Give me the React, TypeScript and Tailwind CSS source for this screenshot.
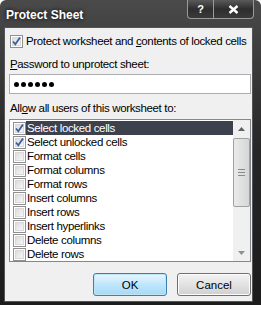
import React from 'react'

const items = [
  { label: 'Select locked cells', checked: true, selected: true },
  { label: 'Select unlocked cells', checked: true },
  { label: 'Format cells' },
  { label: 'Format columns' },
  { label: 'Format rows' },
  { label: 'Insert columns' },
  { label: 'Insert rows' },
  { label: 'Insert hyperlinks' },
  { label: 'Delete columns' },
  { label: 'Delete rows' },
]

const CheckBox = ({ checked }: { checked?: boolean }) => (
  <div className="relative h-[13px] w-[13px] shrink-0 border border-[#8f8f8f] bg-white">
    <div className="absolute inset-[1px] border border-[#d8d8d8] bg-gradient-to-br from-[#dcdcdc] to-[#f6f6f6]" />
    {checked && (
      <svg className="absolute left-[0px] top-[0px]" width="11" height="11" viewBox="0 0 11 11">
        <path d="M2 5.5 L4.3 8.3 L9 1.5" fill="none" stroke="#3c5fa0" strokeWidth="1.8" />
      </svg>
    )}
  </div>
)

const App = () => {
  return (
    <div className="h-[313px] w-[261px] bg-white font-['Liberation_Sans',Arial,sans-serif] text-[11.5px] leading-[14px] tracking-[-0.35px] text-black">
      {/* window frame */}
      <div className="flex h-[305px] w-[261px] flex-col rounded-t-[6px] bg-gradient-to-b from-[#4a4a4a] via-[#262626] to-[#1c1c1c] pb-[3px] pl-[4px] pr-[8px]">
        {/* title bar */}
        <div className="flex h-[27px] shrink-0 items-start">
          <div className="pl-[2px] pt-[8px] text-[12px] font-bold tracking-normal text-white [text-shadow:0_0_4px_#000]">
            Protect Sheet
          </div>
          <div className="ml-auto mr-[-1px] flex h-[19px] overflow-hidden rounded-b-[4px] border border-t-0 border-[#9a9a9a] bg-gradient-to-b from-[#5a5a5a] via-[#2e2e2e] to-[#3a3a3a]">
            <div className="flex w-[26px] items-center justify-center border-r border-[#9a9a9a] text-[11px] font-bold text-white">
              ?
            </div>
            <div className="flex w-[39px] items-center justify-center">
              <svg width="11" height="9" viewBox="0 0 11 9">
                <path d="M1.5 1 L9.5 8 M9.5 1 L1.5 8" stroke="#fff" strokeWidth="2.4" />
              </svg>
            </div>
          </div>
        </div>

        {/* client area */}
        <div className="flex flex-1 flex-col border border-[#555] bg-[#f0f0f0] pl-[4px] pr-[1px]">
          <div className="mt-[6px] flex items-center gap-[3px] pl-[1px]">
            <CheckBox checked />
            <span>
              Protect worksheet and <u>c</u>ontents of locked cells
            </span>
          </div>

          <div className="mt-[9px] pl-[1px]">
            <u>P</u>assword to unprotect sheet:
          </div>
          <div className="mt-[3px] flex h-[20px] items-center gap-[2px] border border-[#abadb3] bg-white pl-[4px]">
            {[0, 1, 2, 3, 4, 5].map(i => (
              <div key={i} className="h-[5px] w-[5px] rounded-full bg-black" />
            ))}
          </div>

          <div className="mt-[7px] pl-[1px]">
            All<u>o</u>w all users of this worksheet to:
          </div>

          {/* list box */}
          <div className="mt-[4px] flex h-[143px] border border-[#828790] bg-white">
            <div className="flex flex-1 flex-col pl-[3px] pt-[1px]">
              {items.map(item => (
                <div key={item.label} className="flex h-[14px] items-center">
                  <CheckBox checked={item.checked} />
                  <span
                    className={
                      item.selected
                        ? 'flex h-[14px] flex-1 items-center bg-[#3d414e] pl-[1px] text-white'
                        : 'pl-[1px]'
                    }
                  >
                    {item.label}
                  </span>
                </div>
              ))}
            </div>
            {/* scrollbar */}
            <div className="flex w-[17px] flex-col bg-[#f0f0f0]">
              <div className="flex h-[17px] items-center justify-center">
                <svg width="7" height="4" viewBox="0 0 7 4">
                  <path d="M0 4 L3.5 0 L7 4 Z" fill="#606060" />
                </svg>
              </div>
              <div className="mt-[1px] flex h-[69px] items-center justify-center rounded-[2px] border border-[#a0a0a0] bg-gradient-to-r from-[#eaeaea] to-[#d6d6d6]">
                <div className="flex flex-col gap-[2px]">
                  <div className="h-[1px] w-[7px] bg-[#8a8a8a]" />
                  <div className="h-[1px] w-[7px] bg-[#8a8a8a]" />
                  <div className="h-[1px] w-[7px] bg-[#8a8a8a]" />
                </div>
              </div>
              <div className="flex-1" />
              <div className="flex h-[17px] items-center justify-center">
                <svg width="7" height="4" viewBox="0 0 7 4">
                  <path d="M0 0 L3.5 4 L7 0 Z" fill="#909090" />
                </svg>
              </div>
            </div>
          </div>

          {/* buttons */}
          <div className="mt-[11px] flex justify-end gap-[10px] tracking-normal">
            <button className="h-[23px] w-[74px] rounded-[3px] border border-[#3c7fb1] bg-gradient-to-b from-[#eaf6fd] via-[#bee6fd] to-[#a7d9f5] text-[11.5px] shadow-[inset_0_0_0_1px_#c0e4f7]">
              OK
            </button>
            <button className="h-[23px] w-[74px] rounded-[3px] border border-[#707070] bg-gradient-to-b from-[#f2f2f2] via-[#e3e3e3] to-[#cfcfcf] text-[11.5px] shadow-[inset_0_0_0_1px_#fcfcfc]">
              Cancel
            </button>
          </div>
        </div>
      </div>
    </div>
  )
}

export default App
